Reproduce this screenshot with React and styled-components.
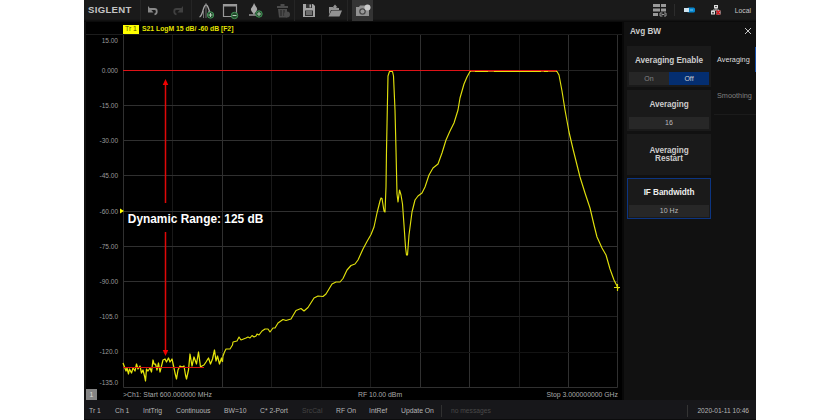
import React from "react";
import styled, { createGlobalStyle } from "styled-components";

const GlobalStyle = createGlobalStyle`
  * {
    box-sizing: border-box;
  }
  body {
    margin: 0;
    background: #fff;
    font-family: "Liberation Sans", Arial, sans-serif;
  }
`;

const columns = [172.5, 222.5, 271.5, 321.5, 370.5, 420.5, 469.5, 519.5, 568.5];
const dimColumns = [172.5, 271.5, 321.5, 370.5, 519.5];
const rows = [105.5, 140.5, 175.5, 211.5, 246.5, 281.5, 316.5, 352.5];

const levels = [
  { text: "15.00", y: 42.5 },
  { text: "0.000", y: 72.5 },
  { text: "-15.00", y: 107.5 },
  { text: "-30.00", y: 142.5 },
  { text: "-45.00", y: 177.5 },
  { text: "-60.00", y: 213.5 },
  { text: "-75.00", y: 248.5 },
  { text: "-90.00", y: 283.5 },
  { text: "-105.0", y: 318.5 },
  { text: "-120.0", y: 354 },
  { text: "-135.0", y: 384.5 },
];

const noise =
  "123,363 124.5,367 126,371 127,368 128.5,374 129.5,369 131.5,373 133,368 135,371 136.5,364 138,369 140,366 141.5,373 143,370 144.5,376 145.5,381 146.5,369 148,371 150,368 151.5,372 153,360 154,364 155.5,364 157,370 158.5,363 160,372 161.5,366 163,360 165,359 166.5,362 168.5,358 170,362 172,359 174,368 175,373 176.5,379 178,370 180,366 182,367 184,366 185.5,375 186.5,379 188.5,370 190,354 192,366 194,357 196.5,364 198.5,352 200.5,367 202,366 204,365 206,362 208.5,358 210.5,364 212.5,359 214.5,350 216,361 217.5,356 219.5,364 221.5,358 222.5,362";
const rise =
  "223,356 224.5,352 226,349 230,349 232.5,345 233,342 237,341 239,337 241,340 246,338 248,337 250,338 252,335.5 254,337 256,336 257,334 259,335 262,331 265,329 268,329 270,332 273,328 275,328 278,323 283,319.5 286,320.5 291,319 296,310.5 301,308.5 304,311 308,307.5 314,298 318,296 323,296.5 326,294 332,284 336,282 340,282 343,278.5 347,270 351,265.5 355,264 358,260 363,249 367,241.5 371,234.5 374,227 377,213 380,201 381,198 382,198.5 384,211 385,212 386,187";
const peak =
  "386.5,150 387.5,100 388,76 389.5,71.5 392.5,71.5 393.5,76 395,110 396,150 397,194 398,202 399.5,190 401,195 402.5,204 404,225 405.5,247 406.5,255 407.5,255 409,235 412,212 415,200 418,196 422,193 425,187 429,175 433,168 438,164 442,153 446,140 450,131 454,123 458,110 460,98 464,84 467,77 470,71.5 557,71.5";
const fall =
  "559,75 562,91 565,110 569,132 573,149 577,165 580,177 585,193 590,208 594,225 597,237 602,248 606,255 610,269 614,280 617,286 618,289";

const menu = [
  { title: "Averaging Enable", toggle: true },
  { title: "Averaging", value: "16" },
  { title: "Averaging Restart", wrap: true },
  { title: "IF Bandwidth", value: "10 Hz", active: true },
];

const statusItems = [
  { text: "Tr 1", width: 26 },
  { text: "Ch 1", width: 28 },
  { text: "IntTrig", width: 33 },
  { text: "Continuous", width: 48 },
  { text: "BW=10", width: 36 },
  { text: "C* 2-Port", width: 42 },
  { text: "SrcCal", width: 34, dim: true },
  { text: "RF On", width: 33 },
  { text: "IntRef", width: 32 },
  { text: "Update On", width: 40 },
];

const UndoIcon = ({ flip }) => (
  <svg width="14" height="12" viewBox="0 0 14 12">
    <g transform={flip ? "translate(14 0) scale(-1 1)" : undefined} fill="none" stroke="currentColor">
      <path d="M3 4h5.500c3 0 3 4.500 0 5.500" strokeWidth="1.800" />
      <path d="M2 1v6.500h5.500z" fill="currentColor" stroke="none" />
    </g>
  </svg>
);

const PlusDot = ({ x, y, minus }) => (
  <g>
    <circle cx={x} cy={y} r="3.200" fill="#244a2c" stroke="#419457" strokeWidth="1" />
    <path
      d={`M${x - 2} ${y}h4${minus ? "" : `M${x} ${y - 2}v4`}`}
      stroke="#b5ccb9"
      strokeWidth="1"
    />
  </g>
);

const TraceIcon = () => (
  <svg width="18" height="18" viewBox="0 0 18 18" fill="none">
    <path d="M1.500 15C5 14 5 3 8 3s3 10 7 12" stroke="#a4a4a4" strokeWidth="1.300" />
    <path d="M8 1v15M5.500 9v7M10.500 9v7" stroke="#858585" strokeWidth=".8" />
    <PlusDot x={12.5} y={13} />
  </svg>
);

const WindowIcon = () => (
  <svg width="17" height="18" viewBox="0 0 17 18" fill="none">
    <path d="M1.500 2.500h13v12h-13z" stroke="#999" strokeWidth="1.200" />
    <path d="M1 3.500h14" stroke="#999" strokeWidth="2" />
    <PlusDot x={12.5} y={13.5} minus />
  </svg>
);

const MarkerIcon = () => (
  <svg width="16" height="17" viewBox="0 0 16 17">
    <path d="M6 1c1 3 4 5 3 7-.8 2-2 2.500-3 5-1-2.500-2.500-3-3-5-.5-2 2-3 3-7z" fill="#aaa" />
    <path d="M1 13h8" stroke="#999" strokeWidth="1.500" />
    <PlusDot x={11} y={12} />
  </svg>
);

const TrashIcon = () => (
  <svg width="15" height="16" viewBox="0 0 15 16" fill="#4b4b4b">
    <path d="M1 3h11v2H1zM4.500 1h4v2h-4zM2 6h9v8.500H3z" />
    <path d="M5 7v6M8 7v6" stroke="#222" />
    <circle cx="11" cy="11.500" r="3" />
  </svg>
);

const SaveIcon = () => (
  <svg width="12" height="13" viewBox="0 0 12 13">
    <path d="M0 0h10l2 2v11H0z" fill="#a4a4a4" />
    <path d="M3 0h6v4H3z" fill="#333" />
    <path d="M6.500 .5h1.500v3H6.500z" fill="#aaa" />
    <path d="M2 6.500h8V12H2z" fill="#303030" />
    <path d="M3 8h6M3 10h6" stroke="#aaa" />
  </svg>
);

const FolderIcon = () => (
  <svg width="14" height="13" viewBox="0 0 14 13" fill="#929292">
    <path d="M1 3h4l1 1h5v2H3l-2 5z" />
    <path d="M3.500 6.500H14L11.500 12.500H.5z" />
    <path d="M4.500 3.500 7 .5 9.500 3.500H8v2H6v-2z" />
  </svg>
);

const CameraIcon = () => (
  <svg width="16" height="13" viewBox="0 0 16 13">
    <path d="M1 3h3l1-1.500h5L11 3h3v9H1z" fill="#929292" />
    <circle cx="7.500" cy="7.500" r="3.300" fill="#494949" />
    <circle cx="7.500" cy="7.500" r="2" fill="#999" />
    <circle cx="12.500" cy="3.500" r="3" fill="#cbcbcb" />
  </svg>
);

const ListIcon = () => (
  <svg width="14" height="13" viewBox="0 0 14 13">
    <path
      d="M0 1.500h7M0 6h7M0 10.500h5M8 1.500h5M8 6h5"
      stroke="#999"
      strokeWidth="2.800"
    />
    <path d="M9.500 9H7v3h2.500M11 9h2v3h-2M8.500 10.500h3" fill="none" stroke="#999" />
  </svg>
);

const UsbIcon = () => (
  <svg width="11" height="6" viewBox="0 0 11 6">
    <rect x="3" y=".5" width="8" height="5" rx="1.500" fill="#0789d2" />
    <path d="M0 1h5v4H0z" fill="#cfe2ed" />
    <path d="M6 3h3" stroke="#78c3ec" />
  </svg>
);

const LanIcon = () => (
  <svg width="10" height="10" viewBox="0 0 10 10">
    <path d="M5 3v3M2 7V5h6v2" stroke="#aaa" fill="none" />
    <path d="M3 0h4v3.500H3zM0 5.500h4v4H0zM5.500 5.500h4v4h-4z" fill="#ddd" />
    <path d="M4 1h2v1H4zM1 7h2v1.500H1z" fill="#555" />
    <path d="M5.500 5.500 9 9.500M9 5.500 5.500 9.500" stroke="#d31f25" strokeWidth="1.700" />
  </svg>
);

const Plot = () => (
  <Chart viewBox="84 35 538 353">
    {columns.map((x) => (
      <line
        key={x}
        x1={x}
        x2={x}
        y1="35"
        y2="387"
        stroke={dimColumns.includes(x) ? "#191919" : "#303030"}
      />
    ))}
    <line x1="123" x2="618" y1="70.500" y2="70.500" stroke="#242424" />
    {rows.map((y) => (
      <line
        key={y}
        x1="123"
        x2="618"
        y1={y}
        y2={y}
        stroke={y === 352.5 ? "#131313" : y === 316.5 ? "#202020" : "#303030"}
      />
    ))}
    <path d="M123.500 35V387.500H617.500V35" fill="none" stroke="#303030" />
    {levels.map((level) => (
      <Level key={level.text} x="118" y={level.y}>
        {level.text}
      </Level>
    ))}
    <path d="M120 208.500v5l4-2.500z" fill="#ff0" />
    <g fill="none" stroke="#e0e00c" strokeWidth="1.150" strokeLinejoin="round">
      <polyline points={noise} stroke="#e6e60a" strokeWidth="1.250" />
      <polyline points={`222.5,362 ${rise} ${peak} ${fall}`} />
      <path d="M614 287.500h6M617.500 284v7" />
    </g>
    <path d="M123 70.500H557" stroke="#df1217" strokeWidth="1.200" />
    <path d="M123 367.500H204" stroke="#d81212" />
    <path d="M471 71.500h4M488 71.500h6M541 71.500h3M548 71.500h8" stroke="#bc7711" />
    <path d="M165.500 83V203M165.500 232V352" stroke="#df0808" strokeWidth="1.500" />
    <path d="M165.500 79l2.800 6h-5.600zM165.500 356l2.800-6h-5.600z" fill="#f00000" />
    <Caption x="127.800" y="222.500">
      Dynamic Range: 125 dB
    </Caption>
  </Chart>
);

export default function App() {
  return (
    <>
      <GlobalStyle />
      <Screen>
        <Toolbar>
          <Brand>SIGLENT</Brand>
          <Tool $width={25} $color="#888" $line>
            <UndoIcon />
          </Tool>
          <Tool $width={26} $color="#404040">
            <UndoIcon flip />
          </Tool>
          <Tool $width={30} $line>
            <TraceIcon />
          </Tool>
          <Tool $width={18}>
            <WindowIcon />
          </Tool>
          <Tool $width={34}>
            <MarkerIcon />
          </Tool>
          <Tool $width={21}>
            <TrashIcon />
          </Tool>
          <Tool $width={29} $line>
            <SaveIcon />
          </Tool>
          <Tool $width={24}>
            <FolderIcon />
          </Tool>
          <Tool $width={5} $line />
          <CameraButton>
            <CameraIcon />
          </CameraButton>
          <Corner>
            <ListIcon />
            <Rule />
            <UsbIcon />
            <LanIcon />
            <Local>Local</Local>
          </Corner>
        </Toolbar>
        <Body>
          <Display>
            <TraceInfo>
              <TraceTag>Tr 1</TraceTag>
              <span>S21 LogM 15 dB/ -60 dB [F2]</span>
            </TraceInfo>
            <Plot />
            <Sweep>
              <Channel>1</Channel>
              <Start>&gt;Ch1: Start 600.000000 MHz</Start>
              <Power>RF 10.00 dBm</Power>
              <Stop>Stop 3.000000000 GHz</Stop>
            </Sweep>
          </Display>
          <Panel>
            <PanelHead>
              <span>Avg BW</span>
              <svg width="8" height="8" viewBox="0 0 8 8">
                <path d="M1 1l6 6M7 1L1 7" stroke="#c8c8c8" />
              </svg>
            </PanelHead>
            <PanelBody>
              <Cards>
                {menu.map((item) => (
                  <Card key={item.title} $active={item.active}>
                    <CardTitle $active={item.active} $wrap={item.wrap}>
                      {item.title}
                    </CardTitle>
                    {item.toggle && (
                      <Toggle>
                        <Option>On</Option>
                        <Option $on>Off</Option>
                      </Toggle>
                    )}
                    {item.value && <Value>{item.value}</Value>}
                  </Card>
                ))}
              </Cards>
              <Tabs>
                <Tab $active>Averaging</Tab>
                <Tab>Smoothing</Tab>
              </Tabs>
            </PanelBody>
          </Panel>
        </Body>
        <StatusBar>
          {statusItems.map((item) => (
            <Status key={item.text} $width={item.width} $dim={item.dim}>
              {item.text}
            </Status>
          ))}
          <Message>no messages</Message>
          <Clock>2020-01-11 10:46</Clock>
        </StatusBar>
      </Screen>
    </>
  );
}

const Screen = styled.div`
  width: 672px;
  height: 420px;
  margin: 0 84px;
  display: flex;
  flex-direction: column;
  background: #101011;
  overflow: hidden;
`;

const Toolbar = styled.div`
  height: 22px;
  flex-shrink: 0;
  display: flex;
  background: linear-gradient(#1a1a1a 19px, #080808);
`;

const Brand = styled.div`
  width: 56px;
  padding-left: 4px;
  font-size: 9.6px;
  line-height: 19px;
  font-weight: bold;
  letter-spacing: 0.3px;
  color: #c4c4c4;
`;

const Tool = styled.div`
  width: ${(props) => props.$width}px;
  height: 21px;
  flex-shrink: 0;
  display: flex;
  align-items: center;
  justify-content: center;
  color: ${(props) => props.$color || "#999"};
  border-left: ${(props) => (props.$line ? "1px solid #252525" : "none")};

  svg {
    flex-shrink: 0;
  }
`;

const CameraButton = styled.div`
  width: 21px;
  height: 21px;
  display: flex;
  align-items: center;
  justify-content: center;
  background: #343434;
`;

const Corner = styled.div`
  margin-left: auto;
  height: 20px;
  padding-right: 5px;
  display: flex;
  align-items: center;
`;

const Rule = styled.div`
  width: 1px;
  height: 12px;
  margin: 0 9px 0 7px;
  background: #2c2c2c;

  & + svg {
    margin-right: 16px;
  }
`;

const Local = styled.span`
  margin-left: 14px;
  font-size: 6.8px;
  color: #c8c8c8;
`;

const Body = styled.div`
  height: 378px;
  display: flex;
`;

const Display = styled.div`
  width: 538px;
  background: #000;
  border-left: 2px solid #101010;
`;

const TraceInfo = styled.div`
  height: 13px;
  padding: 3px 0 0 37px;
  display: flex;
  gap: 3px;
  font-size: 6.8px;
  line-height: 8px;
  font-weight: bold;
  color: #e4e400;
  border-bottom: 1px solid #1c1c1c;
  white-space: nowrap;
`;

const TraceTag = styled.span`
  width: 16px;
  padding-left: 2px;
  background: #ff0;
  color: #555500;
  font-weight: normal;
`;

const Chart = styled.svg`
  display: block;
  width: 538px;
  height: 353px;
  margin-left: -2px;
`;

const Level = styled.text`
  font-size: 6.5px;
  text-anchor: end;
  fill: #9a9a9a;
`;

const Caption = styled.text`
  font-size: 11.9px;
  font-weight: bold;
  fill: #fff;
`;

const Sweep = styled.div`
  height: 12px;
  display: flex;
  align-items: center;
  padding-right: 4px;
  font-size: 6.85px;
  color: #aaa;
  white-space: nowrap;
`;

const Channel = styled.div`
  width: 11px;
  height: 11px;
  background: #858585;
  color: #ddd;
  line-height: 11px;
  text-align: center;
`;

const Start = styled.div`
  width: 235px;
  padding-left: 26px;
`;

const Power = styled.div`
  padding-left: 26px;
`;

const Stop = styled.div`
  margin-left: auto;
`;

const Panel = styled.div`
  flex: 1;
  padding-left: 3px;
  border-left: 2px solid #080808;
  background: #111;
`;

const PanelHead = styled.div`
  height: 24px;
  padding: 0 4px 6px 3px;
  display: flex;
  align-items: center;
  justify-content: space-between;
  font-size: 8.2px;
  font-weight: bold;
  color: #ccc;
`;

const PanelBody = styled.div`
  display: flex;
`;

const Cards = styled.div`
  width: 84px;
  display: flex;
  flex-direction: column;
  gap: 3px;
`;

const Card = styled.div`
  height: 41px;
  padding: 1px;
  display: flex;
  flex-direction: column;
  background: #1a1a1a;
  border: 1px solid ${(props) => (props.$active ? "#0c3582" : "#1a1a1a")};
`;

const CardTitle = styled.div`
  flex: 1;
  display: flex;
  align-items: center;
  justify-content: center;
  padding: ${(props) => (props.$wrap ? "0 18px" : "1px 0 0")};
  font-size: 8.2px;
  letter-spacing: -0.06px;
  line-height: 8px;
  font-weight: bold;
  text-align: center;
  color: ${(props) => (props.$active ? "#eee" : "#ccc")};
`;

const Toggle = styled.div`
  height: 13px;
  display: flex;
`;

const Option = styled.div`
  flex: 1;
  font-size: 7px;
  line-height: 13px;
  text-align: center;
  background: ${(props) => (props.$on ? "#042e70" : "#262626")};
  color: ${(props) => (props.$on ? "#d0d0d0" : "#858585")};
`;

const Value = styled.div`
  height: 12px;
  background: #272727;
  font-size: 7px;
  line-height: 12px;
  text-align: center;
  color: #bbb;
`;

const Tabs = styled.div`
  flex: 1;
  padding-left: 3px;
`;

const Tab = styled.div`
  height: ${(props) => (props.$active ? "25px" : "42px")};
  margin-top: 1px;
  padding-left: 3px;
  font-size: 7.3px;
  line-height: ${(props) => (props.$active ? "25px" : "46px")};
  color: ${(props) => (props.$active ? "#ddd" : "#808080")};
  border-right: ${(props) => (props.$active ? "1px solid #184fa9" : "none")};
  border-bottom: ${(props) => (props.$active ? "none" : "1px solid #1b1b1b")};
`;

const StatusBar = styled.div`
  height: 20px;
  padding: 2px 7px 0 5px;
  display: flex;
  align-items: center;
  background: #17171a;
  border-bottom: 1px solid #0c0c0d;
  font-size: 6.8px;
  color: #b5b5b5;
  white-space: nowrap;
`;

const Status = styled.div`
  width: ${(props) => props.$width}px;
  color: ${(props) => (props.$dim ? "#444" : "inherit")};
`;

const Message = styled.div`
  padding-left: 9px;
  border-left: 1px solid #303030;
  line-height: 12px;
  font-size: 6.7px;
  color: #484848;
`;

const Clock = styled.div`
  margin-left: auto;
  padding-left: 9px;
  border-left: 1px solid #343434;
  line-height: 12px;
  font-size: 6.6px;
`;
